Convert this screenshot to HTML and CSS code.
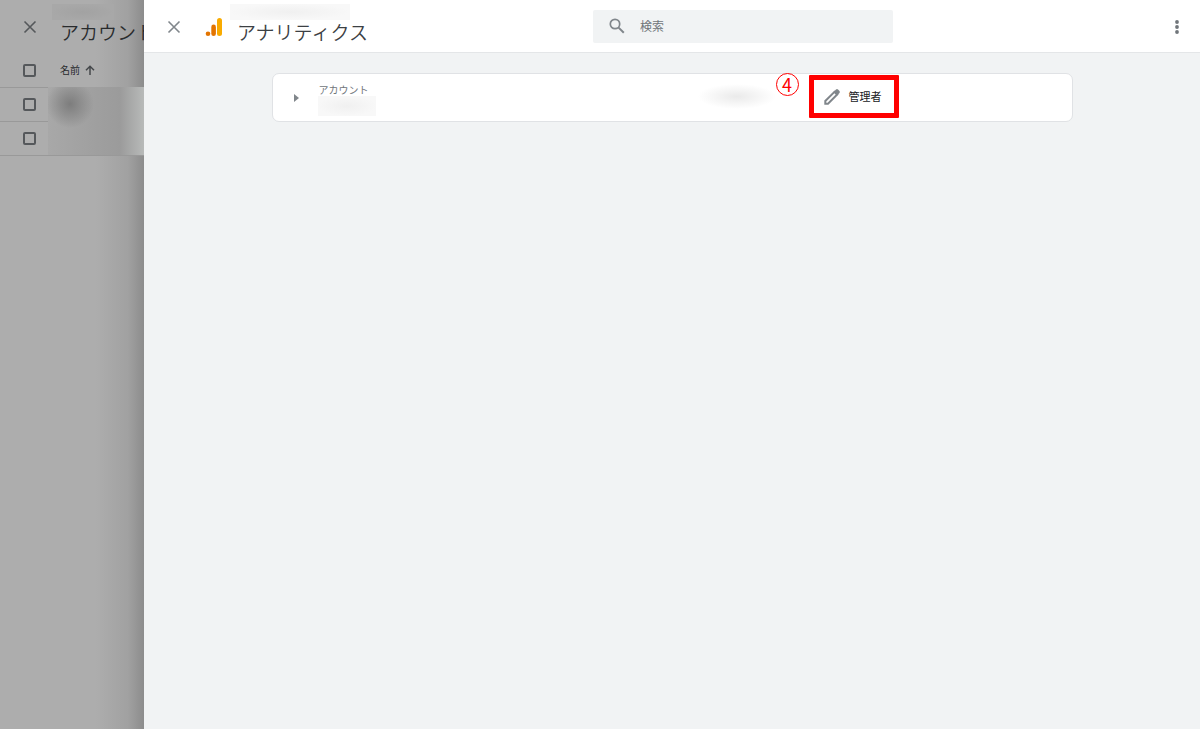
FILE: index.html
```html
<!DOCTYPE html>
<html lang="ja">
<head>
    <meta charset="UTF-8">
    <title>アナリティクス</title>
    <link rel="stylesheet" href="styles.css">
</head>
<body>
    <aside class="accounts">
        <header class="accounts-header">
            <button class="icon-button" aria-label="閉じる">
                <svg width="14" height="14" viewBox="0 0 14 14"><path d="M1.5 1.5l11 11M12.5 1.5l-11 11" stroke="currentColor" stroke-width="1.6" fill="none"/></svg>
            </button>
            <div class="title-block">
                <div class="masked masked-account"></div>
                <h2 class="title">アカウント</h2>
            </div>
        </header>
        <div class="row row-head">
            <input type="checkbox" id="check-all" class="check" aria-label="すべて選択">
            <label for="check-all" class="sort">名前
                <svg width="10" height="10" viewBox="0 0 10 10"><path d="M5 10V1.5M1 5.3l4-4 4 4" stroke="currentColor" stroke-width="1.5" fill="none"/></svg>
            </label>
        </div>
        <div class="row"><input type="checkbox" class="check" aria-label="アカウント 1"></div>
        <div class="row"><input type="checkbox" class="check" aria-label="アカウント 2"></div>
        <div class="masked-list"></div>
    </aside>

    <main class="drawer">
        <header class="drawer-header">
            <div class="brand">
                <button class="icon-button" aria-label="閉じる">
                    <svg width="14" height="14" viewBox="0 0 14 14"><path d="M1.5 1.5l11 11M12.5 1.5l-11 11" stroke="currentColor" stroke-width="1.6" fill="none"/></svg>
                </button>
                <svg class="logo" width="18" height="20" viewBox="0 0 18 20">
                    <rect x="12" y="1" width="5" height="18" rx="2.5" fill="#f9ab00"/>
                    <rect x="6.3" y="7.6" width="4.6" height="11.4" rx="2.3" fill="#e37400"/>
                    <circle cx="3" cy="16.8" r="2.3" fill="#e37400"/>
                </svg>
                <div class="title-block">
                    <div class="masked masked-property"></div>
                    <h1 class="title">アナリティクス</h1>
                </div>
            </div>
            <div class="search">
                <label for="search">
                    <svg width="16" height="16" viewBox="0 0 16 16"><circle cx="6" cy="6" r="4.7" stroke="currentColor" stroke-width="1.7" fill="none"/><path d="M9.6 9.6l5.2 5.2" stroke="currentColor" stroke-width="2"/></svg>
                </label>
                <input type="text" id="search" placeholder="検索">
            </div>
            <button class="icon-button more" aria-label="その他">
                <svg width="6" height="14" viewBox="0 0 6 14" fill="currentColor"><circle cx="3" cy="2" r="1.9"/><circle cx="3" cy="7" r="1.9"/><circle cx="3" cy="12" r="1.9"/></svg>
            </button>
        </header>

        <section class="card">
            <button class="icon-button expand" aria-label="展開">
                <svg width="5" height="8" viewBox="0 0 5 8"><path d="M0 0l5 4-5 4z" fill="currentColor"/></svg>
            </button>
            <div class="account">
                <div class="account-label">アカウント</div>
                <div class="masked masked-name"></div>
            </div>
            <div class="masked masked-id"></div>
            <div class="role">
                <span class="step">4</span>
                <button class="role-button">
                    <svg width="18" height="18" viewBox="0 0 18 18"><path d="M2.300 15.700v-2.700L11.500 3.800l2.700 2.700L5 15.700z" fill="none" stroke="currentColor" stroke-width="2"/><path d="M10.500 4l2.500-2.500q1-.8 2 0l1.500 1.500q.8 1 0 2L14 7.500z" fill="currentColor"/></svg>
                    <span>管理者</span>
                </button>
            </div>
        </section>
    </main>
</body>
</html>
```

FILE: styles.css
```css
* {
    box-sizing: border-box;
}
body {
    margin: 0;
    display: flex;
    min-height: 100vh;
    background: #f1f3f4;
    color: #3c4043;
    font-family: "Noto Sans CJK JP", sans-serif;
    font-size: 11px;
    line-height: 16px;
}
button,
input {
    margin: 0;
    font: inherit;
    color: inherit;
}
svg {
    display: block;
    flex: none;
}
.icon-button {
    display: flex;
    flex: none;
    padding: 0;
    border: none;
    background: none;
    color: #80868b;
    cursor: pointer;
}
.title-block {
    display: flex;
    flex-direction: column;
    padding-bottom: 6px;
}
.title {
    margin: 0;
    font-size: 19px;
    font-weight: 350;
    line-height: 24px;
    white-space: nowrap;
}
.masked {
    background: radial-gradient(closest-side, #f0f0f0, #f8f8f8);
}

/* dimmed list behind the drawer */
.accounts {
    position: relative;
    flex: 0 0 144px;
    overflow: hidden;
    background: linear-gradient(to left, #8c8c8c, #a1a1a1 16px, #adadad 48px);
    color: #292b2d;
}
.accounts-header {
    display: flex;
    align-items: center;
    gap: 23px;
    height: 53px;
    padding: 1px 0 0 23px;
}
.accounts .icon-button {
    color: #55585b;
}
.masked-account {
    width: 62px;
    height: 16px;
    margin-left: -8px;
    background: radial-gradient(closest-side, #a2a2a2, #a8a8a8);
}
.row {
    display: flex;
    align-items: center;
    gap: 24px;
    height: 34px;
    padding-left: 23px;
    border-bottom: 1px solid #999;
}
.row-head {
    height: 35px;
}
.check {
    appearance: none;
    width: 13px;
    height: 13px;
    border: 2px solid #55585b;
    border-radius: 2px;
}
.sort {
    display: flex;
    align-items: center;
    gap: 5px;
    font-size: 10px;
}
.sort svg {
    color: #45484b;
}
.masked-list {
    position: absolute;
    top: 87px;
    left: 48px;
    right: 0;
    height: 68px;
    background:
        radial-gradient(circle at 22px 17px, #7d7d7d, transparent 24px),
        linear-gradient(to right, #a8a8a8, #9b9b9b 72px, #b8bab9);
}

/* drawer */
.drawer {
    flex: 1;
    min-width: 0;
}
.drawer-header {
    display: grid;
    grid-template-columns: 449px 300px 1fr;
    align-items: center;
    height: 53px;
    background: #fff;
    border-bottom: 1px solid #e4e6e8;
}
.brand {
    display: flex;
    align-items: center;
    padding: 2px 0 0 23px;
}
.logo {
    margin: 0 14px 0 24px;
}
.masked-property {
    width: 120px;
    height: 16px;
    margin-left: -7px;
}
.search {
    display: flex;
    align-items: center;
    gap: 15px;
    height: 33px;
    padding-left: 16px;
    border-radius: 2px;
    background: #f1f3f4;
    color: #80868b;
}
.search input {
    flex: 1;
    min-width: 0;
    padding: 0;
    border: none;
    outline: none;
    background: none;
    font-size: 12px;
}
.search input::placeholder {
    color: #70757a;
    opacity: 1;
}
.more {
    justify-self: end;
    margin-right: 20px;
    padding-top: 2px;
    color: #70757a;
}
.card {
    display: flex;
    align-items: center;
    max-width: 801px;
    height: 49px;
    margin: 20px auto;
    padding-left: 21px;
    background: #fff;
    border: 1px solid #e0e2e5;
    border-radius: 7px;
}
.account {
    flex: 1;
    margin-left: 19px;
    padding-top: 4px;
    color: #70757a;
    font-size: 10px;
    line-height: 12px;
}
.account-label {
    padding-left: 1px;
}
.masked-name {
    width: 58px;
    height: 20px;
}
.masked-id {
    width: 78px;
    height: 25px;
    margin-bottom: 2px;
    background: radial-gradient(closest-side, #eaeaea, #fff);
}
.role {
    position: relative;
    width: 263px;
    margin: 0 0 2px 33px;
}
.role-button {
    display: flex;
    align-items: center;
    gap: 8px;
    width: 90px;
    height: 43px;
    padding: 0 0 0 9px;
    border: 5px solid #f00;
    border-radius: 1px;
    background: #fff;
    color: #202124;
    white-space: nowrap;
    cursor: pointer;
}
.role-button svg {
    color: #80868b;
}
.role-button span {
    padding-bottom: 2px;
}
/* step marker over the card */
.step {
    position: absolute;
    top: -2px;
    left: -33px;
    width: 23px;
    height: 23px;
    border: 1px solid #f00;
    border-radius: 50%;
    color: #f00;
    font-size: 18px;
    line-height: 20px;
    text-align: center;
}
```
